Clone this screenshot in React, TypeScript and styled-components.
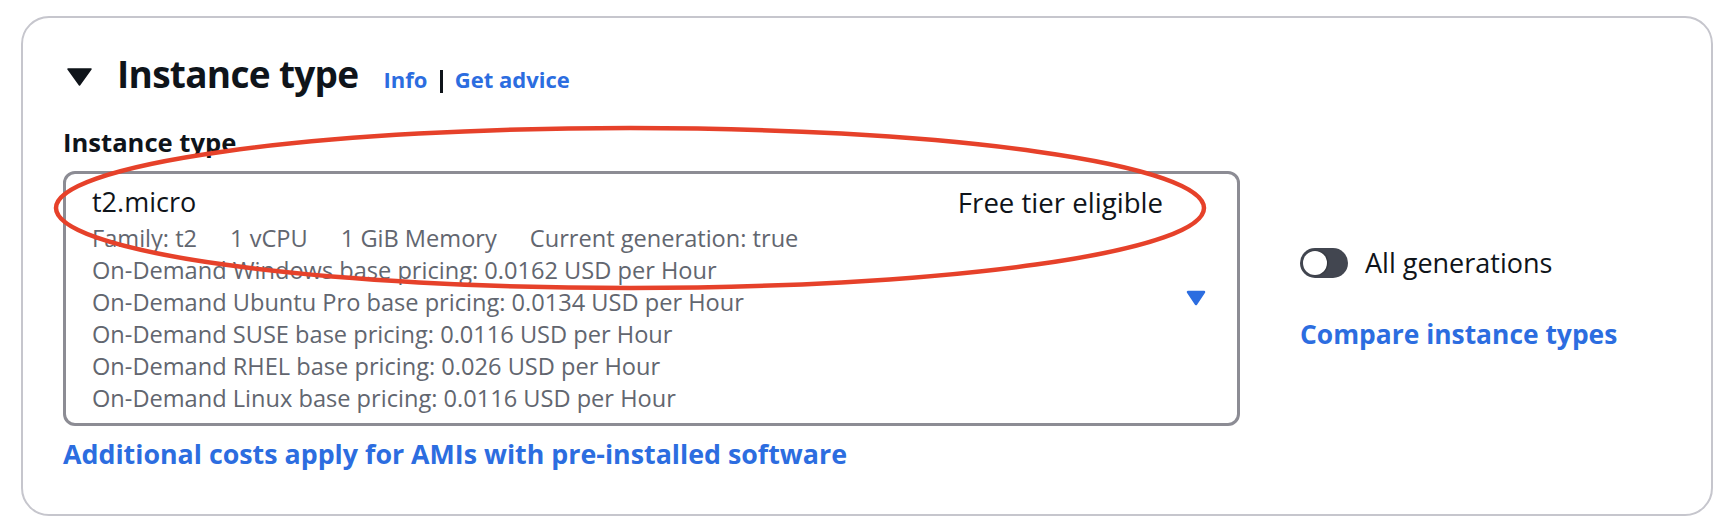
import styled, { createGlobalStyle } from 'styled-components';

const GlobalStyle = createGlobalStyle`
    body {
        margin: 0;
        background: #ffffff;
        font-family: "Open Sans", "Noto Sans", sans-serif;
        color: #0f141a;
    }
`

const pricing = [
    'On-Demand Windows base pricing: 0.0162 USD per Hour',
    'On-Demand Ubuntu Pro base pricing: 0.0134 USD per Hour',
    'On-Demand SUSE base pricing: 0.0116 USD per Hour',
    'On-Demand RHEL base pricing: 0.026 USD per Hour',
    'On-Demand Linux base pricing: 0.0116 USD per Hour',
];

const meta = ['Family: t2', '1 vCPU', '1 GiB Memory', 'Current generation: true'];

export default function App() {
    return (
        <>
            <GlobalStyle />
            <Page>
                <Card>
                    <Header>
                        <Caret width="25" height="18" viewBox="0 0 25 18">
                            <path d="M1 1 H24 L12.5 17 Z" fill="#0f141a" stroke="#0f141a" strokeWidth="1.5" strokeLinejoin="round" />
                        </Caret>
                        <Title>Instance type</Title>
                        <Links>
                            <Link href="#">Info</Link>
                            <Bar />
                            <Link href="#">Get advice</Link>
                        </Links>
                    </Header>

                    <Body>
                        <LeftColumn>
                            <Label>Instance type</Label>
                            <Select>
                                <SelectContent>
                                    <TopLine>
                                        <span>t2.micro</span>
                                        <Badge>Free tier eligible</Badge>
                                    </TopLine>
                                    <MetaRow>
                                        {meta.map((m) => <span key={m}>{m}</span>)}
                                    </MetaRow>
                                    {pricing.map((p) => <PriceLine key={p}>{p}</PriceLine>)}
                                </SelectContent>
                                <svg width="20" height="16" viewBox="0 0 20 16">
                                    <path d="M2 2 H18 L10 14 Z" fill="#2c6de0" stroke="#2c6de0" strokeWidth="2.5" strokeLinejoin="round" />
                                </svg>
                            </Select>
                            <FooterLink href="#">Additional costs apply for AMIs with pre-installed software</FooterLink>
                        </LeftColumn>

                        <RightColumn>
                            <ToggleRow>
                                <Track>
                                    <Knob />
                                </Track>
                                <span>All generations</span>
                            </ToggleRow>
                            <CompareLink href="#">Compare instance types</CompareLink>
                        </RightColumn>
                    </Body>
                </Card>

                <Annotation width="1734" height="526" viewBox="0 0 1734 526">
                    <ellipse cx="630" cy="208" rx="574" ry="80" fill="none" stroke="#e6412a" strokeWidth="4.5" />
                </Annotation>
            </Page>
        </>
    );
}

const Page = styled.div`
    position: relative;
    padding: 16px 21px 0 21px;
`

const Card = styled.section`
    border: 2px solid #c6c6cd;
    border-radius: 28px;
    padding: 34px 40px 44px 40px;
`

const Header = styled.div`
    display: flex;
    align-items: baseline;
`

const Caret = styled.svg`
    align-self: center;
    margin: 0 25px 0 4px;
    flex-shrink: 0;
`

const Title = styled.h2`
    margin: 0;
    font-size: 37px;
    font-weight: 700;
    letter-spacing: -0.7px;
    line-height: 44px;
    color: #0f141a;
`

const Links = styled.span`
    margin-left: 25px;
    font-size: 22px;
    font-weight: 700;
    line-height: 44px;
`

const Link = styled.a`
    color: #2c6de0;
    text-decoration: none;
`

const Bar = styled.span`
    display: inline-block;
    width: 2.5px;
    height: 23px;
    background: #0f141a;
    vertical-align: -5px;
    margin: 0 12px 0 13px;
`

const Body = styled.div`
    display: flex;
    align-items: flex-start;
    gap: 60px;
    margin-top: 26px;
`

const LeftColumn = styled.div`
    width: 1177px;
    display: flex;
    flex-direction: column;
`

const Label = styled.div`
    font-size: 25.6px;
    font-weight: 700;
    line-height: 32px;
    margin-bottom: 12px;
`

const Select = styled.div`
    display: flex;
    align-items: center;
    gap: 23px;
    border: 3px solid #8c8c94;
    border-radius: 12px;
    padding: 8px 31px 9px 26px;
`

const SelectContent = styled.div`
    flex: 1;
    display: flex;
    flex-direction: column;
`

const TopLine = styled.div`
    display: flex;
    justify-content: space-between;
    font-size: 27px;
    line-height: 40px;
    color: #0f141a;
`

const Badge = styled.span`
    font-size: 27.6px;
`

const MetaRow = styled.div`
    display: flex;
    gap: 33px;
    font-size: 23.6px;
    line-height: 32px;
    color: #62666f;
`

const PriceLine = styled.div`
    font-size: 23.6px;
    line-height: 32px;
    color: #62666f;
`

const FooterLink = styled.a`
    margin-top: 12px;
    font-size: 26.8px;
    font-weight: 700;
    line-height: 32px;
    color: #2c6de0;
    text-decoration: none;
`

const RightColumn = styled.div`
    display: flex;
    flex-direction: column;
    gap: 40px;
    margin-top: 121px;
`

const ToggleRow = styled.div`
    display: flex;
    align-items: center;
    gap: 17px;
    height: 30px;
    font-size: 27px;
    line-height: 30px;
    color: #0f141a;
`

const Track = styled.div`
    width: 48px;
    height: 30px;
    border-radius: 15px;
    background: #424650;
    display: flex;
    align-items: center;
    padding-left: 3px;
    box-sizing: border-box;
`

const Knob = styled.div`
    width: 24px;
    height: 24px;
    border-radius: 50%;
    background: #ffffff;
    box-shadow: 1px 0 2px rgba(0, 0, 0, 0.35);
`

const CompareLink = styled.a`
    font-size: 26.4px;
    font-weight: 700;
    line-height: 32px;
    color: #2c6de0;
    text-decoration: none;
`

const Annotation = styled.svg`
    position: absolute;
    top: 0;
    left: 0;
    pointer-events: none;
`
